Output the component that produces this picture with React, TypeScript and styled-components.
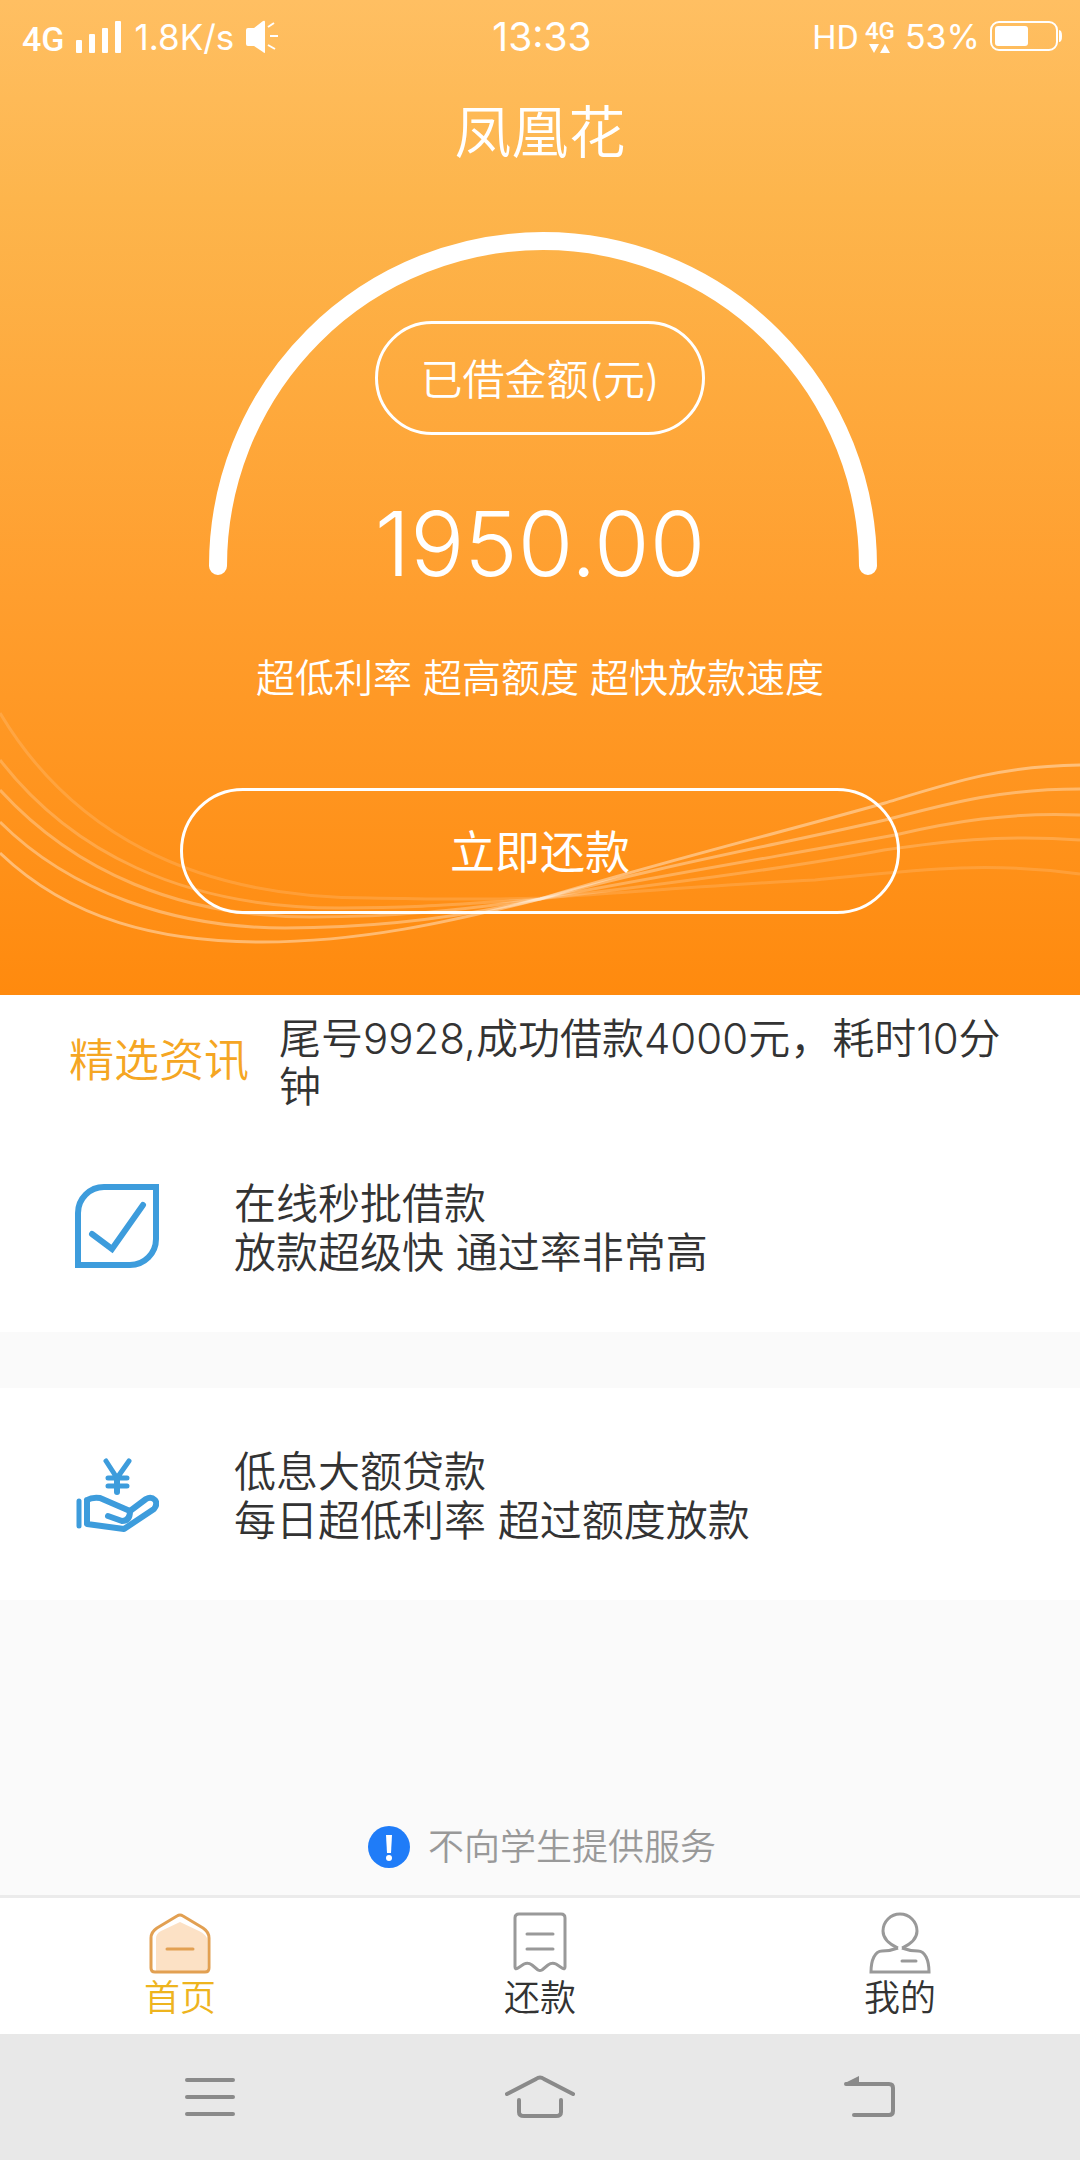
import React from "react";
import styled, { createGlobalStyle } from "styled-components";

const GlobalStyle = createGlobalStyle`
  * { box-sizing: border-box; }
  body {
    margin: 0;
    background: #fafafa;
    color: #333;
    font-family: Inter, "Noto Sans CJK SC", sans-serif;
    font-weight: 350;
  }
  h1, h2, p { margin: 0; font-size: inherit; font-weight: inherit; }
  button { font: inherit; color: inherit; background: none; border: 0; padding: 0; cursor: pointer; }
  a { color: inherit; text-decoration: none; }
  svg { display: block; flex: none; }
`;

const Page = styled.div`
  min-height: 100vh;
  display: flex;
  flex-direction: column;
`;

const Hero = styled.header`
  position: relative;
  display: flex;
  flex-direction: column;
  align-items: center;
  padding-bottom: 81px;
  color: #fff;
  background: linear-gradient(#ffbf62 0%, #fdb54c 20%, #ff9e2e 60%, #ff8a0e 100%);
`;

const Waves = styled.svg`
  position: absolute;
  left: 0;
  bottom: 0;
  width: 100%;
  height: 295px;
  fill: none;
  stroke: #fff;
  stroke-width: 3;
`;

const StatusBar = styled.div`
  align-self: stretch;
  display: grid;
  grid-template-columns: 1fr auto 1fr;
  align-items: center;
  height: 74px;
  padding: 0 18px 0 22px;
  font-weight: 400;
`;

const StatusGroup = styled.div<{ $end?: boolean }>`
  display: flex;
  align-items: center;
  justify-content: ${(p) => (p.$end ? "flex-end" : "flex-start")};
  gap: ${(p) => (p.$end ? "10px" : "12px")};
  font-size: ${(p) => (p.$end ? "34px" : "35px")};
  line-height: 40px;
`;

const Network = styled.span`
  font: 500 34px/44px Roboto, sans-serif;
  padding-top: 4px;
`;

const Carrier = styled.div`
  display: flex;
  align-items: center;
  gap: 6px;
`;

const Hd = styled.span`
  font: 400 34px/40px Roboto, sans-serif;
`;

const DataLink = styled.span`
  display: flex;
  flex-direction: column;
  align-items: center;
  gap: 2px;
  font: 500 24px/22px Roboto, sans-serif;
`;

const Clock = styled.time`
  font-size: 39px;
  line-height: 40px;
`;

const Title = styled.h1`
  padding-top: 2px;
  font-size: 57px;
  line-height: 114px;
`;

const Gauge = styled.section`
  display: grid;
  justify-items: center;
  align-items: start;
  margin-top: 42px;
  > * { grid-area: 1 / 1; }
`;

const GaugeContent = styled.div`
  display: flex;
  flex-direction: column;
  align-items: center;
  padding-top: 89px;
`;

const GaugeLabel = styled.h2`
  display: flex;
  align-items: center;
  justify-content: center;
  width: 330px;
  height: 114px;
  padding-bottom: 4px;
  border: 3px solid #fff;
  border-radius: 57px;
  font-size: 42px;
`;

const Amount = styled.p`
  margin-top: 56px;
  font-size: 90px;
  font-weight: 300;
  line-height: 106px;
`;

const Slogan = styled.p`
  margin-top: 53px;
  font-size: 39px;
  line-height: 56px;
`;

const RepayButton = styled.button`
  position: relative;
  width: calc(100% - 360px);
  height: 126px;
  margin-top: 82px;
  padding-bottom: 4px;
  border: 3px solid #fff;
  border-radius: 63px;
  font-size: 45px;
  font-weight: 400;
`;

const Main = styled.main`
  flex: 1;
  display: flex;
  flex-direction: column;
`;

const News = styled.section`
  display: flex;
  align-items: center;
  gap: 30px;
  min-height: 125px;
  padding: 10px 70px 0 69px;
  background: #fff;
`;

const NewsLabel = styled.h2`
  flex: none;
  padding-bottom: 4px;
  color: #f5a623;
  font-size: 45px;
  line-height: 48px;
`;

const NewsText = styled.p`
  font-size: 42px;
  line-height: 48px;
`;

const Features = styled.div`
  display: flex;
  flex-direction: column;
  gap: 56px;
`;

const Feature = styled.section`
  display: flex;
  align-items: center;
  gap: 75px;
  min-height: 212px;
  padding: 0 75px;
  background: #fff;
  font-size: 42px;
  line-height: 49px;
`;

const FeatureText = styled.div`
  padding-top: 4px;
`;

const Notice = styled.p`
  display: flex;
  align-items: center;
  justify-content: center;
  gap: 18px;
  height: 98px;
  margin-top: auto;
  padding: 2px 0 0 4px;
  color: #999;
  font-size: 36px;
  line-height: 42px;
`;

const TabBar = styled.nav`
  display: grid;
  grid-template-columns: repeat(3, 1fr);
  border-top: 3px solid #ebebeb;
  background: #fff;
`;

const Tab = styled.a<{ $active?: boolean }>`
  display: flex;
  flex-direction: column;
  align-items: center;
  gap: 2px;
  height: 136px;
  padding-top: 14px;
  color: ${(p) => (p.$active ? "#eeb41e" : "#333")};
  font-size: 36px;
  line-height: 44px;
`;

const SystemBar = styled.div`
  display: grid;
  grid-template-columns: repeat(3, 1fr);
  height: 126px;
  padding: 0 45px;
  background: #e8e8e8;
`;

const SystemButton = styled.button`
  display: flex;
  align-items: center;
  justify-content: center;
`;

const waves = [
  { opacity: 0.14, d: "M0 713C70 830 190 898 370 898C430 899 480 900 540 898C650 891 730 884 815 880C900 872 980 860 1080 874" },
  { opacity: 0.2, d: "M0 760C70 850 180 908 340 908C420 908 460 904 540 899C650 886 790 868 884 850C940 842 1000 834 1080 840" },
  { opacity: 0.28, d: "M0 790C75 872 180 917 310 917C400 917 460 910 540 899C650 878 790 854 895 835C950 822 1010 812 1080 815" },
  { opacity: 0.34, d: "M0 822C70 892 175 928 285 928C370 928 450 920 540 899C650 868 790 842 885 820C950 803 1000 789 1080 789" },
  { opacity: 0.4, d: "M0 853C70 920 160 942 262 942C360 942 450 922 540 899C650 865 790 830 885 803C950 783 1000 766 1080 765" },
];

const SignalIcon = () => (
  <svg width="46" height="34" viewBox="0 0 46 34" fill="#fff" aria-hidden="true">
    <rect x="0" y="20" width="6" height="13" rx="1" />
    <rect x="13" y="14" width="6" height="19" rx="1" />
    <rect x="26" y="8" width="6" height="25" rx="1" />
    <rect x="39" y="1" width="6" height="32" rx="1" />
  </svg>
);

const SpeakerIcon = () => (
  <svg width="34" height="34" viewBox="0 0 34 34" aria-hidden="true">
    <path d="M2 8H8L17 1Q19 0 19 2V32Q19 34 17 32L8 26H2Q0 26 0 24V10Q0 8 2 8Z" fill="#fff" />
    <path d="M22 7L28 3M24 16H32M22 25L29 29" stroke="#fff" strokeWidth="2" fill="none" />
  </svg>
);

const BatteryIcon = () => (
  <svg width="72" height="32" viewBox="0 0 72 32" aria-hidden="true">
    <rect x="1" y="1" width="66" height="28" rx="8" fill="none" stroke="#fff" strokeWidth="2" />
    <rect x="5" y="5" width="33" height="20" rx="3" fill="#fff" />
    <path d="M69 9Q72 9 72 15T69 21Z" fill="#fff" />
  </svg>
);

const CheckIcon = () => (
  <svg width="84" height="84" viewBox="0 0 84 84" fill="none" stroke="#3d9cdc" strokeWidth="6" aria-hidden="true">
    <path d="M81 3H29A26 26 0 0 0 3 29V81H55A26 26 0 0 0 81 55Z" />
    <path d="M17 50L37 65L68 21" strokeLinecap="round" />
  </svg>
);

const HandIcon = () => (
  <svg width="84" height="76" viewBox="0 0 84 76" fill="none" stroke="#3d9cdc" strokeWidth="5" strokeLinecap="round" strokeLinejoin="round" aria-hidden="true">
    <path d="M31 5L42 22L54 5M33 22H52M33 30H52" />
    <path d="M42 22V36" strokeWidth="6" />
    <path d="M4 45V70" />
    <path d="M12 44V68L49 73L79 53Q83 48 80 44Q76 40 71 43L55 55L25 42Q17 41 12 44" strokeWidth="6" />
    <path d="M33 60L47 65Q55 65 55 55" strokeWidth="6" />
  </svg>
);

const NoticeIcon = () => (
  <svg width="42" height="42" viewBox="0 0 42 42" aria-hidden="true">
    <circle cx="21" cy="21" r="21" fill="#1f7cf8" />
    <path d="M18 9H24L23 27H19Z" fill="#fff" />
    <circle cx="21" cy="32" r="3" fill="#fff" />
  </svg>
);

const HomeIcon = () => (
  <svg width="62" height="62" viewBox="0 0 62 62" fill="none" strokeWidth="3" strokeLinecap="round" strokeLinejoin="round" aria-hidden="true">
    <path d="M7 59V26Q7 22 12 19L31 10L50 19Q56 22 58 26V59Z" fill="#fce1c5" />
    <path d="M28 4Q31 2 34 4L54 16Q60 20 60 26V56Q60 60 56 60H6Q2 60 2 56V26Q2 20 8 16Z" stroke="#e2a052" />
    <path d="M18 37H44" stroke="#e2a052" />
  </svg>
);

const ReceiptIcon = () => (
  <svg width="62" height="62" viewBox="0 0 62 62" fill="none" stroke="#999" strokeWidth="3" strokeLinecap="round" strokeLinejoin="round" aria-hidden="true">
    <path d="M10 2H52Q56 2 56 6V55Q56 58 53 56L47 52Q43 50 39 53L33 58Q31 59 29 58L23 53Q19 50 15 52L9 56Q6 58 6 55V6Q6 2 10 2Z" />
    <path d="M18 22H44M18 37H44" />
  </svg>
);

const PersonIcon = () => (
  <svg width="62" height="62" viewBox="0 0 62 62" fill="none" stroke="#999" strokeWidth="3" aria-hidden="true">
    <path d="M29 36C20 32 14 27 14 19A17 17 0 0 1 48 19C48 27 42 32 33 36" />
    <path d="M29 36C24 38 19 39 13 39C6 39 2 48 2 60H60C60 48 56 39 49 39C43 39 38 38 33 36" />
    <path d="M33 49H47" strokeLinecap="round" />
  </svg>
);

const MenuIcon = () => (
  <svg width="50" height="40" viewBox="0 0 50 40" stroke="#8a8a8a" strokeWidth="4" strokeLinecap="round" aria-hidden="true">
    <path d="M2 3H48M2 20H48M2 37H48" />
  </svg>
);

const SystemHomeIcon = () => (
  <svg width="70" height="44" viewBox="0 0 70 44" fill="none" stroke="#8a8a8a" strokeWidth="4" strokeLinecap="round" aria-hidden="true">
    <path d="M2 19L31 4Q35 1 39 4L68 19" />
    <path d="M14 25V37Q14 41 19 41H51Q56 41 56 37V25" />
  </svg>
);

const BackIcon = () => (
  <svg width="52" height="42" viewBox="0 0 52 42" fill="none" stroke="#8a8a8a" strokeWidth="4" strokeLinecap="round" aria-hidden="true">
    <path d="M2 8H45Q49 8 49 12V35Q49 39 45 39H10" />
    <path d="M1 7L15 0V8H2Z" fill="#8a8a8a" stroke="none" />
  </svg>
);

export default function App() {
  return (
    <Page>
      <GlobalStyle />
      <Hero>
        <Waves viewBox="0 700 1080 295" preserveAspectRatio="none" aria-hidden="true">
          {waves.map((w) => (
            <path key={w.d} d={w.d} opacity={w.opacity} />
          ))}
        </Waves>
        <StatusBar>
          <StatusGroup>
            <Network>4G</Network>
            <SignalIcon />
            <span>1.8K/s</span>
            <SpeakerIcon />
          </StatusGroup>
          <Clock>13:33</Clock>
          <StatusGroup $end>
            <Carrier>
              <Hd>HD</Hd>
              <DataLink>
                4G
                <svg width="22" height="10" viewBox="0 0 22 10" fill="#fff" aria-hidden="true">
                  <path d="M0 0H10L5 9ZM11 9H21L16 0Z" />
                </svg>
              </DataLink>
            </Carrier>
            <span>53%</span>
            <BatteryIcon />
          </StatusGroup>
        </StatusBar>
        <Title>凤凰花</Title>
        <Gauge>
          <svg width="674" height="344" viewBox="0 0 674 344" fill="none" aria-hidden="true">
            <path d="M15 334A325 325 0 0 1 665 334" stroke="#fff" strokeWidth="18" strokeLinecap="round" />
          </svg>
          <GaugeContent>
            <GaugeLabel>已借金额(元)</GaugeLabel>
            <Amount>1950.00</Amount>
          </GaugeContent>
        </Gauge>
        <Slogan>超低利率 超高额度 超快放款速度</Slogan>
        <RepayButton type="button">立即还款</RepayButton>
      </Hero>
      <Main>
        <News>
          <NewsLabel>精选资讯</NewsLabel>
          <NewsText>尾号9928,成功借款4000元，耗时10分钟</NewsText>
        </News>
        <Features>
          <Feature>
            <CheckIcon />
            <FeatureText>
              <h2>在线秒批借款</h2>
              <p>放款超级快 通过率非常高</p>
            </FeatureText>
          </Feature>
          <Feature>
            <HandIcon />
            <FeatureText>
              <h2>低息大额贷款</h2>
              <p>每日超低利率 超过额度放款</p>
            </FeatureText>
          </Feature>
        </Features>
        <Notice>
          <NoticeIcon />
          不向学生提供服务
        </Notice>
      </Main>
      <TabBar>
        <Tab href="#home" $active aria-current="page">
          <HomeIcon />
          首页
        </Tab>
        <Tab href="#repay">
          <ReceiptIcon />
          还款
        </Tab>
        <Tab href="#mine">
          <PersonIcon />
          我的
        </Tab>
      </TabBar>
      <SystemBar>
        <SystemButton type="button" aria-label="菜单"><MenuIcon /></SystemButton>
        <SystemButton type="button" aria-label="主屏幕"><SystemHomeIcon /></SystemButton>
        <SystemButton type="button" aria-label="返回"><BackIcon /></SystemButton>
      </SystemBar>
    </Page>
  );
}
